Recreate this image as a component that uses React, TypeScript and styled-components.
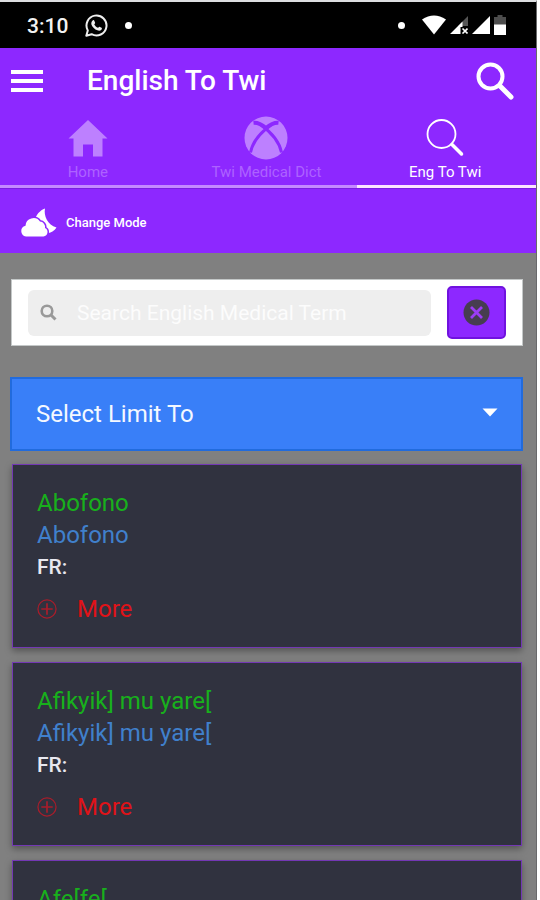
import React from "react";
import styled, { createGlobalStyle } from "styled-components";

const GlobalStyle = createGlobalStyle`
  *, *::before, *::after { box-sizing: border-box; }
  body { margin: 0; background: #fff; font-family: Roboto, "Noto Sans", sans-serif; }
  button, input, select { font-family: inherit; }
  svg { display: block; flex: none; }
`;

const purple = "#8d28ff";

const Screen = styled.div`
  height: 100vh;
  display: flex;
  flex-direction: column;
  overflow: hidden;
  margin-right: 3px;
  border-top: 2px solid #dcdee0;
  border-right: 1px solid #69696b;
  background: #808080;
`;

const StatusBar = styled.div`
  flex: none;
  height: 46px;
  padding: 0 30px 0 27px;
  display: flex;
  align-items: center;
  justify-content: space-between;
  background: #000;
  color: #f2f2f2;
`;

const StatusGroup = styled.div<{ $gap: number }>`
  display: flex;
  align-items: center;
  gap: ${(p) => p.$gap}px;
`;

const Clock = styled.time`
  padding-top: 2px;
  font-size: 21px;
  font-weight: 500;
  line-height: 28px;
`;

const Dot = styled.span<{ $space?: number }>`
  width: 7px;
  height: 7px;
  margin-right: ${(p) => p.$space ?? 0}px;
  border-radius: 50%;
  background: #fff;
`;

const Header = styled.header`
  flex: none;
  background: ${purple};
  color: #fff;
`;

const TitleBar = styled.div`
  height: 64px;
  padding: 2px 22px 0 11px;
  display: flex;
  align-items: center;
`;

const IconButton = styled.button`
  padding: 0;
  border: 0;
  background: none;
  color: inherit;
  cursor: pointer;
`;

const Title = styled.h1`
  flex: 1;
  margin: 0 0 0 44px;
  font-size: 28px;
  font-weight: 500;
  line-height: 32px;
`;

const Tabs = styled.nav`
  display: grid;
  grid-template-columns: repeat(3, 1fr);
  border-bottom: 1px solid #7a1ee0;
`;

const Tab = styled.a<{ $active?: boolean }>`
  height: 76px;
  padding: 4px 3px 0 0;
  display: flex;
  flex-direction: column;
  align-items: center;
  gap: 2px;
  border-bottom: 3px solid ${(p) => (p.$active ? "#fbe6ff" : "#c48aff")};
  color: ${(p) => (p.$active ? "#fff" : "#bd80ff")};
  text-decoration: none;
`;

const TabLabel = styled.span<{ $active?: boolean }>`
  font-size: 15px;
  line-height: 20px;
  color: ${(p) => (p.$active ? "#fff" : "#ad62ff")};
`;

const ModeButton = styled.button`
  width: 100%;
  height: 64px;
  padding: 4px 20px 0;
  display: flex;
  align-items: center;
  gap: 9px;
  border: 0;
  background: none;
  color: #fff;
  font-size: 13px;
  font-weight: 500;
  line-height: 20px;
  cursor: pointer;
`;

const Content = styled.main`
  flex: 1;
  min-height: 0;
  overflow-y: auto;
  scrollbar-width: none;
  padding: 26px 13px 26px 10px;
`;

const SearchForm = styled.form`
  height: 67px;
  margin: 0 0 0 1px;
  padding: 0 16px;
  display: flex;
  align-items: center;
  gap: 16px;
  border: 1px solid #c4c8c8;
  background: #fff;
`;

const SearchField = styled.label`
  flex: 1;
  min-width: 0;
  height: 46px;
  padding: 0 12px;
  display: flex;
  align-items: center;
  gap: 20px;
  border-radius: 6px;
  background: #eee;
  color: #999;
`;

const SearchInput = styled.input`
  flex: 1;
  min-width: 0;
  height: 46px;
  padding: 0;
  border: 0;
  outline: 0;
  background: none;
  color: #555;
  font-size: 21px;
  &::placeholder { color: #fcfcfc; opacity: 1; }
`;

const ClearButton = styled.button`
  width: 59px;
  height: 53px;
  padding: 0;
  display: flex;
  align-items: center;
  justify-content: center;
  border: 2px solid #7012df;
  border-radius: 5px;
  background: ${purple};
  cursor: pointer;
`;

const SelectBox = styled.div`
  margin: 31px 0 13px;
  display: grid;
  align-items: center;
  border: 2px solid #216bdd;
  background: #397ff8;
  color: #fff;
  & > * { grid-area: 1 / 1; }
  & > svg { justify-self: end; margin-right: 23px; margin-bottom: 3px; pointer-events: none; }
`;

const LimitSelect = styled.select`
  appearance: none;
  width: 100%;
  height: 70px;
  padding: 0 60px 0 24px;
  border: 0;
  border-radius: 0;
  background: transparent;
  color: #f4f8ff;
  font-size: 24px;
`;

const CardList = styled.div`
  margin: 0 1px 0 2px;
  display: flex;
  flex-direction: column;
  gap: 14px;
`;

const Card = styled.article`
  padding: 22px 24px;
  border: 1px solid #7338b4;
  background: #30323f;
  box-shadow: 0 3px 7px rgba(0, 0, 0, 0.35);
`;

const Term = styled.p<{ $color: string }>`
  margin: 0;
  font-size: 24px;
  line-height: 32px;
  color: ${(p) => p.$color};
`;

const French = styled.p`
  margin: 0;
  font-size: 21px;
  font-weight: 500;
  line-height: 32px;
  color: #e8e8f0;
`;

const MoreButton = styled.button`
  margin: 10px 0 0;
  padding: 0;
  display: flex;
  align-items: center;
  gap: 20px;
  border: 0;
  background: none;
  color: #e01218;
  font-size: 24px;
  line-height: 32px;
  cursor: pointer;
`;

const entries = [
  { english: "Abofono", twi: "Abofono" },
  { english: "Afikyik] mu yare[", twi: "Afikyik] mu yare[" },
  { english: "Afe[fe[", twi: "Afe[fe[" },
];

const WhatsAppIcon = () => (
  <svg width="23" height="23" viewBox="0 0 23 23" fill="none" stroke="#eee">
    <path d="M1.3 21.7 2.8 16.4A10 10 0 1 1 6.6 20.2Z" strokeWidth="2" strokeLinejoin="round" />
    <path d="M7.2 7c1-1.4 1.8-1 2.1-.2l.8 2c.2.6-.8 1.2-.8 1.6.8 1.6 2 2.7 3.6 3.4.5.1 1-1.3 1.6-1.1l2 1c.7.3.4 1.5-.1 2-1 1-2.4 1.2-4 .6-2.8-1-5-3.2-5.9-5.6-.4-1.3-.1-2.7.7-3.7Z" fill="#eee" stroke="none" />
  </svg>
);

const WifiIcon = () => (
  <svg width="24" height="20" viewBox="0 0 24 20" fill="#fff">
    <path d="M0 4.5Q12-3.5 24 4.5L12 19.5Z" />
  </svg>
);

const NoSignalIcon = () => (
  <svg width="18" height="18" viewBox="0 0 18 18">
    <path d="M18 0V10H8Z" fill="#555" />
    <path d="M0 18 12.5 5.5V11H10.5V18Z" fill="#fff" />
    <path d="m12.500 12.500 5 5m0-5-5 5" stroke="#fff" strokeWidth="1.6" />
  </svg>
);

const SignalIcon = () => (
  <svg width="18" height="18" viewBox="0 0 18 18" fill="#fff">
    <path d="M0 18 18 0V18Z" />
  </svg>
);

const BatteryIcon = () => (
  <svg width="12" height="20" viewBox="0 0 12 20">
    <path d="M3.5 0h5v2H12v8H0V2h3.5Z" fill="#4d4d4d" />
    <path d="M0 9.5h12V20H0Z" fill="#fff" />
  </svg>
);

const MenuIcon = () => (
  <svg width="32" height="24" viewBox="0 0 32 24" fill="#fff">
    <path d="M0 1h32v4H0ZM0 10h32v4H0ZM0 19h32v4H0Z" />
  </svg>
);

const SearchIcon = () => (
  <svg width="38" height="38" viewBox="0 0 38 38" fill="none" stroke="#fff">
    <circle cx="14.5" cy="14.5" r="12" strokeWidth="4" />
    <path d="m24 24 11 11" strokeWidth="5" strokeLinecap="round" />
  </svg>
);

const HomeIcon = () => (
  <svg width="40" height="44" viewBox="0 0 40 44" fill="currentColor">
    <path d="M20 4 39.5 22.500H34.500V40.500H25V28.500H15V40.500H5.500V22.500H.5Z" />
  </svg>
);

const XboxIcon = () => (
  <svg width="44" height="44" viewBox="0 0 44 44">
    <circle cx="22" cy="22" r="21.500" fill="currentColor" />
    <g fill="none" stroke={purple}>
      <path d="M9.500 6.800C15 6.300 19 9.500 22 12 25 9.500 29 6.300 34.500 6.800" strokeWidth="4" />
      <path d="M27 9C20 14 9 24 6.500 36.500M17 9C24 14 35 24 37.500 36.500" strokeWidth="3" />
    </g>
  </svg>
);

const ThinSearchIcon = () => (
  <svg width="38" height="44" viewBox="0 0 38 44" fill="none" stroke="#fff">
    <circle cx="15.500" cy="18" r="14" strokeWidth="1.800" />
    <path d="m26 28.500 9.500 9.500" strokeWidth="3.500" strokeLinecap="round" />
  </svg>
);

const CloudMoonIcon = () => (
  <svg width="37" height="30" viewBox="0 0 37 30" fill="#fff">
    <path d="M25 .5C23.500 7.500 27.500 17 36.500 19.500 34.500 23 31 25 27 25 19 25 14 19 15 12.500 15.700 7 20 2.300 25 .5Z" />
    <path
      d="M6 28.500A5.500 5.500 0 0 1 5.500 17.700 8 8 0 0 1 20 13.500 5.500 5.500 0 0 1 25 20 4.500 4.500 0 0 1 23.500 28.500Z"
      stroke={purple}
      strokeWidth="3"
      paintOrder="stroke"
    />
  </svg>
);

const FieldSearchIcon = () => (
  <svg width="17" height="18" viewBox="0 0 17 18" fill="none" stroke="currentColor">
    <circle cx="7" cy="7" r="5.300" strokeWidth="2.600" />
    <path d="m11 11 4.500 4.500" strokeWidth="3" />
  </svg>
);

const ClearIcon = () => (
  <svg width="27" height="27" viewBox="0 0 27 27">
    <circle cx="13.500" cy="13.500" r="13" fill="#463d50" />
    <path d="m8 8 11 11m0-11L8 19" stroke="#9b3df5" strokeWidth="2.800" />
  </svg>
);

const CaretIcon = () => (
  <svg width="16" height="9" viewBox="0 0 16 9" fill="#fff">
    <path d="M.5.5h15L8 8.500Z" />
  </svg>
);

const PlusCircleIcon = () => (
  <svg width="20" height="20" viewBox="0 0 21 21" fill="none" stroke="#a81d2b" strokeWidth="1.300">
    <circle cx="10.500" cy="10.500" r="9.500" />
    <path d="M10.500 4.500v12M4.500 10.500h12" strokeWidth="1.800" />
  </svg>
);

export default function App() {
  return (
    <>
      <GlobalStyle />
      <Screen>
        <StatusBar>
          <StatusGroup $gap={17}>
            <Clock>3:10</Clock>
            <WhatsAppIcon />
            <Dot />
          </StatusGroup>
          <StatusGroup $gap={4}>
            <Dot $space={13} />
            <WifiIcon />
            <NoSignalIcon />
            <SignalIcon />
            <BatteryIcon />
          </StatusGroup>
        </StatusBar>
        <Header>
          <TitleBar>
            <IconButton type="button" aria-label="Menu">
              <MenuIcon />
            </IconButton>
            <Title>English To Twi</Title>
            <IconButton type="button" aria-label="Search">
              <SearchIcon />
            </IconButton>
          </TitleBar>
          <Tabs>
            <Tab href="#home">
              <HomeIcon />
              <TabLabel>Home</TabLabel>
            </Tab>
            <Tab href="#twi">
              <XboxIcon />
              <TabLabel>Twi Medical Dict</TabLabel>
            </Tab>
            <Tab href="#english" $active aria-current="page">
              <ThinSearchIcon />
              <TabLabel $active>Eng To Twi</TabLabel>
            </Tab>
          </Tabs>
          <ModeButton type="button">
            <CloudMoonIcon />
            Change Mode
          </ModeButton>
        </Header>
        <Content>
          <SearchForm onSubmit={(e) => e.preventDefault()}>
            <SearchField>
              <FieldSearchIcon />
              <SearchInput
                type="text"
                aria-label="Search English Medical Term"
                placeholder="Search English Medical Term"
              />
            </SearchField>
            <ClearButton type="reset" aria-label="Clear">
              <ClearIcon />
            </ClearButton>
          </SearchForm>
          <SelectBox>
            <LimitSelect aria-label="Select Limit To">
              <option>Select Limit To</option>
            </LimitSelect>
            <CaretIcon />
          </SelectBox>
          <CardList>
            {entries.map((entry) => (
              <Card key={entry.english}>
                <Term $color="#18b01c">{entry.english}</Term>
                <Term $color="#4080cc">{entry.twi}</Term>
                <French>FR:</French>
                <MoreButton type="button">
                  <PlusCircleIcon />
                  More
                </MoreButton>
              </Card>
            ))}
          </CardList>
        </Content>
      </Screen>
    </>
  );
}
